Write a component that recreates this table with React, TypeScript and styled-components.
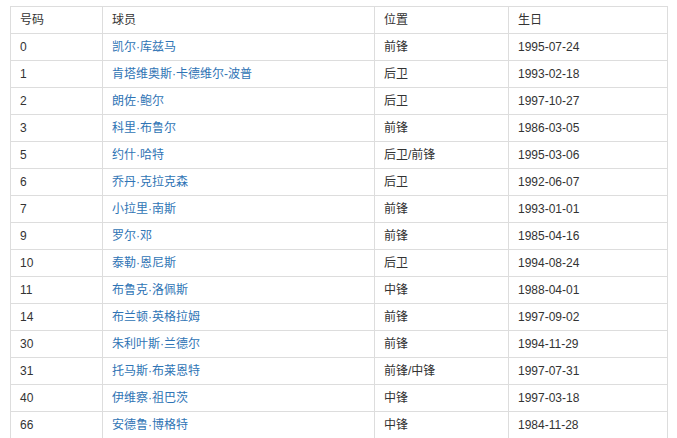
import styled, { createGlobalStyle } from "styled-components";

type Player = {
  no: string;
  name: string;
  pos: string;
  birth: string;
};

const players: Player[] = [
  { no: "0", name: "凯尔·库兹马", pos: "前锋", birth: "1995-07-24" },
  { no: "1", name: "肯塔维奥斯·卡德维尔-波普", pos: "后卫", birth: "1993-02-18" },
  { no: "2", name: "朗佐·鲍尔", pos: "后卫", birth: "1997-10-27" },
  { no: "3", name: "科里·布鲁尔", pos: "前锋", birth: "1986-03-05" },
  { no: "5", name: "约什·哈特", pos: "后卫/前锋", birth: "1995-03-06" },
  { no: "6", name: "乔丹·克拉克森", pos: "后卫", birth: "1992-06-07" },
  { no: "7", name: "小拉里·南斯", pos: "前锋", birth: "1993-01-01" },
  { no: "9", name: "罗尔·邓", pos: "前锋", birth: "1985-04-16" },
  { no: "10", name: "泰勒·恩尼斯", pos: "后卫", birth: "1994-08-24" },
  { no: "11", name: "布鲁克·洛佩斯", pos: "中锋", birth: "1988-04-01" },
  { no: "14", name: "布兰顿·英格拉姆", pos: "前锋", birth: "1997-09-02" },
  { no: "30", name: "朱利叶斯·兰德尔", pos: "前锋", birth: "1994-11-29" },
  { no: "31", name: "托马斯·布莱恩特", pos: "前锋/中锋", birth: "1997-07-31" },
  { no: "40", name: "伊维察·祖巴茨", pos: "中锋", birth: "1997-03-18" },
  { no: "66", name: "安德鲁·博格特", pos: "中锋", birth: "1984-11-28" },
];

const GlobalStyle = createGlobalStyle`
  body {
    margin: 0;
    background: #fff;
    font-family: "Liberation Sans", "Noto Sans CJK SC", Arial, sans-serif;
    font-size: 12px;
    color: #333;
  }
`;

const Wrapper = styled.div`
  padding: 6px 10px 0 10px;
`;

const Table = styled.table`
  width: 657px;
  border-collapse: collapse;
  table-layout: fixed;
  border: 1px solid #ddd;
`;

const Col = styled.col<{ $w: number }>`
  width: ${(p) => p.$w}px;
`;

const Th = styled.th`
  text-align: left;
  font-weight: normal;
  height: 26px;
  line-height: 26px;
  padding: 0 9px;
  border: 1px solid #ddd;
  color: #333;
  white-space: nowrap;
`;

const Td = styled.td`
  height: 26px;
  line-height: 26px;
  padding: 0 9px;
  border: 1px solid #ddd;
  color: #333;
  white-space: nowrap;
`;

const PlayerLink = styled.a`
  color: #2f74b5;
  text-decoration: none;
  cursor: pointer;
`;

function App() {
  return (
    <Wrapper>
      <GlobalStyle />
      <Table>
        <colgroup>
          <Col $w={92} />
          <Col $w={272} />
          <Col $w={134} />
          <Col $w={159} />
        </colgroup>
        <thead>
          <tr>
            <Th>号码</Th>
            <Th>球员</Th>
            <Th>位置</Th>
            <Th>生日</Th>
          </tr>
        </thead>
        <tbody>
          {players.map((p) => (
            <tr key={p.no}>
              <Td>{p.no}</Td>
              <Td>
                <PlayerLink>{p.name}</PlayerLink>
              </Td>
              <Td>{p.pos}</Td>
              <Td>{p.birth}</Td>
            </tr>
          ))}
        </tbody>
      </Table>
    </Wrapper>
  );
}

export default App;
